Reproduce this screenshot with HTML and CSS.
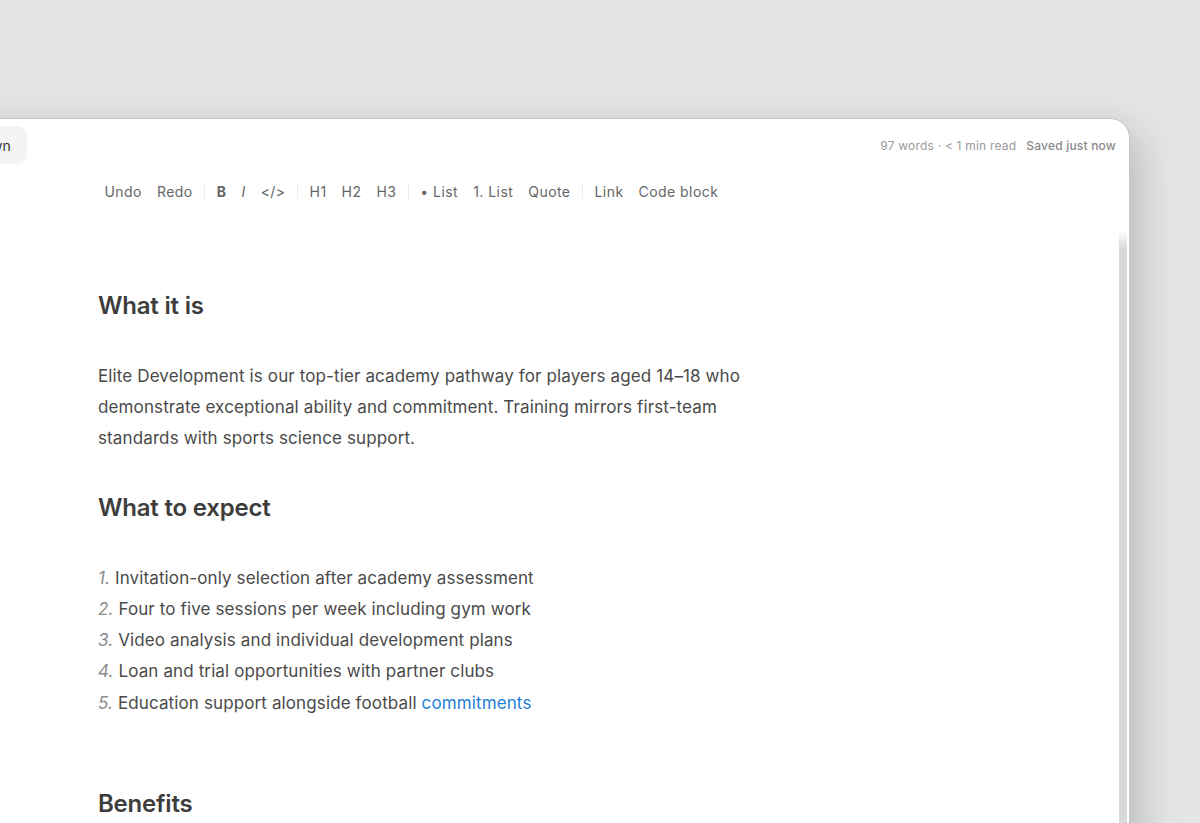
FILE: index.html
```html
<!DOCTYPE html>
<html lang="en">
<head>
<meta charset="utf-8">
<title>Elite Development</title>
<link rel="stylesheet" href="styles.css">
</head>
<body>
<div class="window">
  <header class="header">
    <button class="mode-btn">Markdown</button>
    <div class="meta">
      <span class="count">97 words · &lt; 1 min read</span>
      <span class="saved">Saved just now</span>
    </div>
  </header>
  <div class="main">
    <div class="column">
      <nav class="toolbar">
        <button class="tb">Undo</button>
        <button class="tb">Redo</button>
        <span class="sep"></span>
        <button class="tb bold">B</button>
        <button class="tb italic">I</button>
        <button class="tb">&lt;/&gt;</button>
        <span class="sep"></span>
        <button class="tb">H1</button>
        <button class="tb">H2</button>
        <button class="tb">H3</button>
        <span class="sep"></span>
        <button class="tb">• List</button>
        <button class="tb">1. List</button>
        <button class="tb">Quote</button>
        <span class="sep"></span>
        <button class="tb">Link</button>
        <button class="tb">Code block</button>
      </nav>
      <article class="content">
        <h2>What it is</h2>
        <p>Elite Development is our top-tier academy pathway for players aged 14–18 who demonstrate exceptional ability and commitment. Training mirrors first-team standards with sports science support.</p>
        <h2>What to expect</h2>
        <ol class="list">
          <li><span class="num">1.</span> Invitation-only selection after academy assessment</li>
          <li><span class="num">2.</span> Four to five sessions per week including gym work</li>
          <li><span class="num">3.</span> Video analysis and individual development plans</li>
          <li><span class="num">4.</span> Loan and trial opportunities with partner clubs</li>
          <li><span class="num">5.</span> Education support alongside football <a href="#" class="link">commitments</a></li>
        </ol>
        <p class="empty"><br></p>
        <h2>Benefits</h2>
      </article>
    </div>
    <div class="scrollbar"></div>
  </div>
</div>
</body>
</html>
```

FILE: styles.css
```css
html, body {
  margin: 0;
  padding: 0;
}
body {
  background: #e5e5e5;
  height: 823px;
  overflow: hidden;
  font-family: Inter, "Noto Sans", "Liberation Sans", sans-serif;
}
.window {
  margin-top: 118px;
  margin-left: -120px;
  width: 1250px;
  height: 900px;
  box-sizing: border-box;
  background: #ffffff;
  border: 1px solid #c6c6c6;
  border-radius: 20px;
  box-shadow: 6px 14px 44px rgba(0, 0, 0, 0.22);
  display: flex;
  flex-direction: column;
  overflow: hidden;
}
.header {
  height: 52px;
  display: flex;
  align-items: center;
  justify-content: space-between;
  padding: 0 13px 0 44px;
  flex: none;
}
.mode-btn {
  height: 38px;
  padding: 0 16px;
  border: none;
  border-radius: 9px;
  background: #f4f4f4;
  font-family: inherit;
  font-size: 14px;
  color: #333;
}
.meta {
  display: flex;
  gap: 10px;
  font-size: 12px;
  letter-spacing: 0.2px;
}
.count {
  color: #9a9a9a;
}
.saved {
  color: #888;
  font-weight: 500;
}
.main {
  flex: 1;
  display: flex;
}
.column {
  flex: 1;
}
.toolbar {
  display: flex;
  align-items: center;
  height: 32px;
  margin-top: 4px;
  padding-left: 216px;
}
.tb {
  border: none;
  background: none;
  padding: 0 7.5px;
  font-family: inherit;
  font-size: 14px;
  letter-spacing: 0.45px;
  color: #666;
  height: 28px;
}
.tb.bold {
  font-weight: 700;
}
.tb.italic {
  font-style: italic;
}
.sep {
  width: 1px;
  height: 16px;
  background: #ebebeb;
  margin: 0 4px;
}
.content {
  padding: 44.5px 0 0 217px;
  width: 660px;
  color: #4a4a4a;
  font-size: 17px;
  letter-spacing: 0.12px;
  line-height: 31px;
}
.content h2 {
  font-size: 24px;
  line-height: 32px;
  font-weight: 600;
  letter-spacing: -0.2px;
  color: #3d3d3d;
  margin: 38.5px 0;
}
.content p {
  margin: 0;
}
.list {
  list-style: none;
  margin: 0;
  padding: 0;
  line-height: 31.25px;
}
.num {
  font-style: italic;
  color: #8a8a8a;
}
.link {
  color: #1f7fd6;
  text-decoration: none;
}
.scrollbar {
  width: 8px;
  margin: 60px 2px 0 0;
  background: linear-gradient(to bottom, rgba(214, 214, 214, 0) 0, #d8d8d8 18px, #d8d8d8 100%);
  border-radius: 4px 4px 0 0;
}
```
